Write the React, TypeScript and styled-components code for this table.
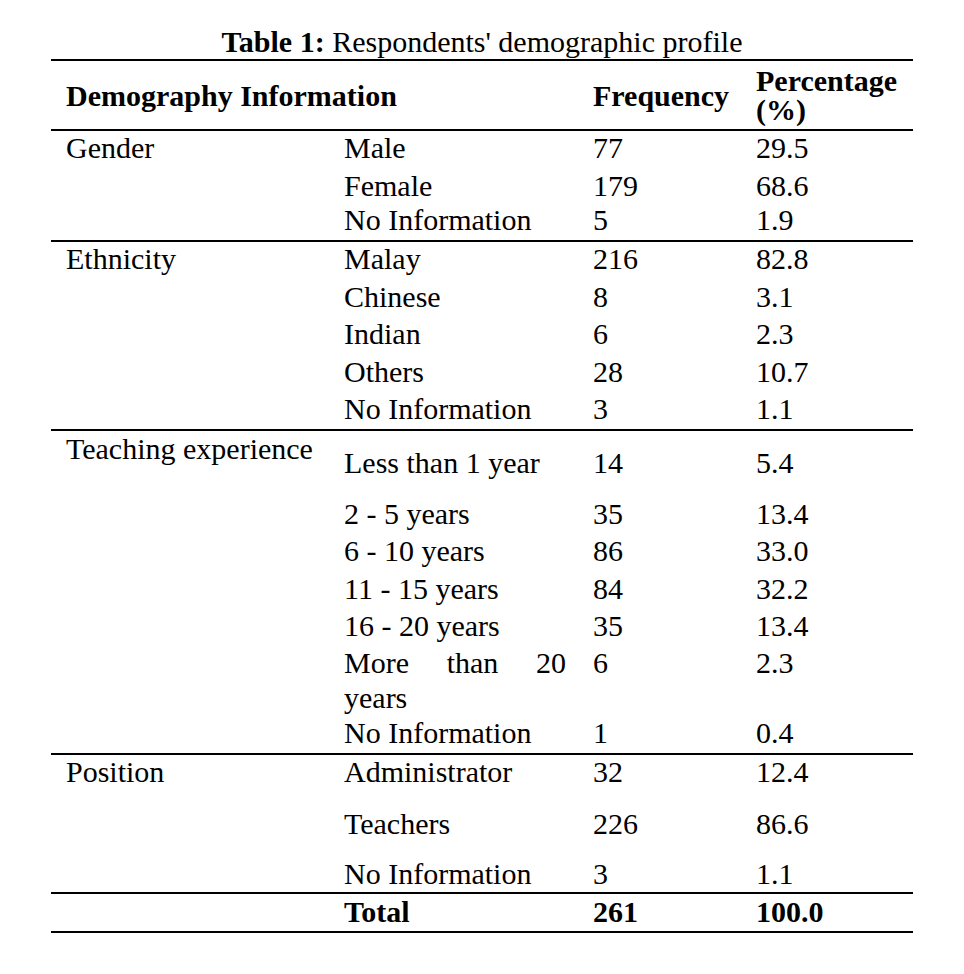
import React from "react";
import styled, { createGlobalStyle } from "styled-components";

const Global = createGlobalStyle`
  html, body { margin: 0; padding: 0; background: #fff; }
  body { font-family: "Liberation Serif", "Times New Roman", serif; color: #000; }
`;

const Page = styled.div`
  padding: 25px 0 0 51px;
  width: 862px;
  font-size: 30px;
`;

const Caption = styled.div`
  text-align: center;
  line-height: 34px;
  height: 34px;
  white-space: nowrap;
`;

const Table = styled.div`
  border-top: 2px solid #000;
  border-bottom: 2px solid #000;
`;

const HeaderRow = styled.div`
  display: grid;
  grid-template-columns: 534px 163px 165px;
  height: 68px;
  align-items: center;
  font-weight: bold;
  border-bottom: 2px solid #000;
`;

const HeadCell = styled.div<{ $left: number }>`
  padding-left: ${(p) => p.$left}px;
  line-height: 29px;
  white-space: ${(p) => (p.$left > 10 ? "nowrap" : "normal")};
  padding-right: 8px;
`;

const Group = styled.div`
  display: flex;
  border-bottom: 2px solid #000;
`;

const Label = styled.div<{ $top?: number }>`
  width: 285px;
  flex: none;
  box-sizing: border-box;
  padding-left: 15px;
  padding-top: ${(p) => p.$top ?? 0}px;
  line-height: 34px;
  white-space: nowrap;
`;

const Rows = styled.div`
  flex: 1;
  display: flex;
  flex-direction: column;
`;

const Row = styled.div<{ $h: number; $pad?: number; $bold?: boolean }>`
  display: grid;
  grid-template-columns: 249px 163px 165px;
  height: ${(p) => p.$h}px;
  padding-top: ${(p) => p.$pad ?? 0}px;
  box-sizing: border-box;
  line-height: 35px;
  font-weight: ${(p) => (p.$bold ? "bold" : "normal")};
`;

const Cell = styled.div`
  padding-left: 8px;
  margin-top: -1px;
`;

const TextCell = styled(Cell)`
  padding-right: 19px;
  text-align: justify;
`;

const TotalRow = styled.div`
  display: flex;
  height: 37px;
  padding-top: 1px;
  box-sizing: border-box;
`;

type R = { label: string; f: string; p: string; h: number; pad?: number };
type G = { name: string; top?: number; rows: R[] };

const groups: G[] = [
  {
    name: "Gender",
    rows: [
      { label: "Male", f: "77", p: "29.5", h: 38 },
      { label: "Female", f: "179", p: "68.6", h: 34 },
      { label: "No Information", f: "5", p: "1.9", h: 37 },
    ],
  },
  {
    name: "Ethnicity",
    rows: [
      { label: "Malay", f: "216", p: "82.8", h: 38 },
      { label: "Chinese", f: "8", p: "3.1", h: 37 },
      { label: "Indian", f: "6", p: "2.3", h: 38 },
      { label: "Others", f: "28", p: "10.7", h: 37 },
      { label: "No Information", f: "3", p: "1.1", h: 37 },
    ],
  },
  {
    name: "Teaching experience",
    top: 1,
    rows: [
      { label: "Less than 1 year", f: "14", p: "5.4", h: 66, pad: 15 },
      { label: "2 - 5 years", f: "35", p: "13.4", h: 37 },
      { label: "6 - 10 years", f: "86", p: "33.0", h: 38 },
      { label: "11 - 15 years", f: "84", p: "32.2", h: 37 },
      { label: "16 - 20 years", f: "35", p: "13.4", h: 37 },
      { label: "More than 20 years", f: "6", p: "2.3", h: 70 },
      { label: "No Information", f: "1", p: "0.4", h: 37 },
    ],
  },
  {
    name: "Position",
    rows: [
      { label: "Administrator", f: "32", p: "12.4", h: 52 },
      { label: "Teachers", f: "226", p: "86.6", h: 50 },
      { label: "No Information", f: "3", p: "1.1", h: 35 },
    ],
  },
];

export default function App() {
  return (
    <>
      <Global />
      <Page>
        <Caption>
          <b>Table 1:</b> Respondents' demographic profile
        </Caption>
        <Table>
          <HeaderRow>
            <HeadCell $left={15}>Demography Information</HeadCell>
            <HeadCell $left={8}>Frequency</HeadCell>
            <HeadCell $left={8}>Percentage (%)</HeadCell>
          </HeaderRow>
          {groups.map((g) => (
            <Group key={g.name}>
              <Label $top={g.top}>{g.name}</Label>
              <Rows>
                {g.rows.map((r, i) => (
                  <Row key={i} $h={r.h} $pad={r.pad}>
                    <TextCell>{r.label}</TextCell>
                    <Cell>{r.f}</Cell>
                    <Cell>{r.p}</Cell>
                  </Row>
                ))}
              </Rows>
            </Group>
          ))}
          <TotalRow>
            <Label />
            <Rows>
              <Row $h={36} $bold>
                <TextCell>Total</TextCell>
                <Cell>261</Cell>
                <Cell>100.0</Cell>
              </Row>
            </Rows>
          </TotalRow>
        </Table>
      </Page>
    </>
  );
}
